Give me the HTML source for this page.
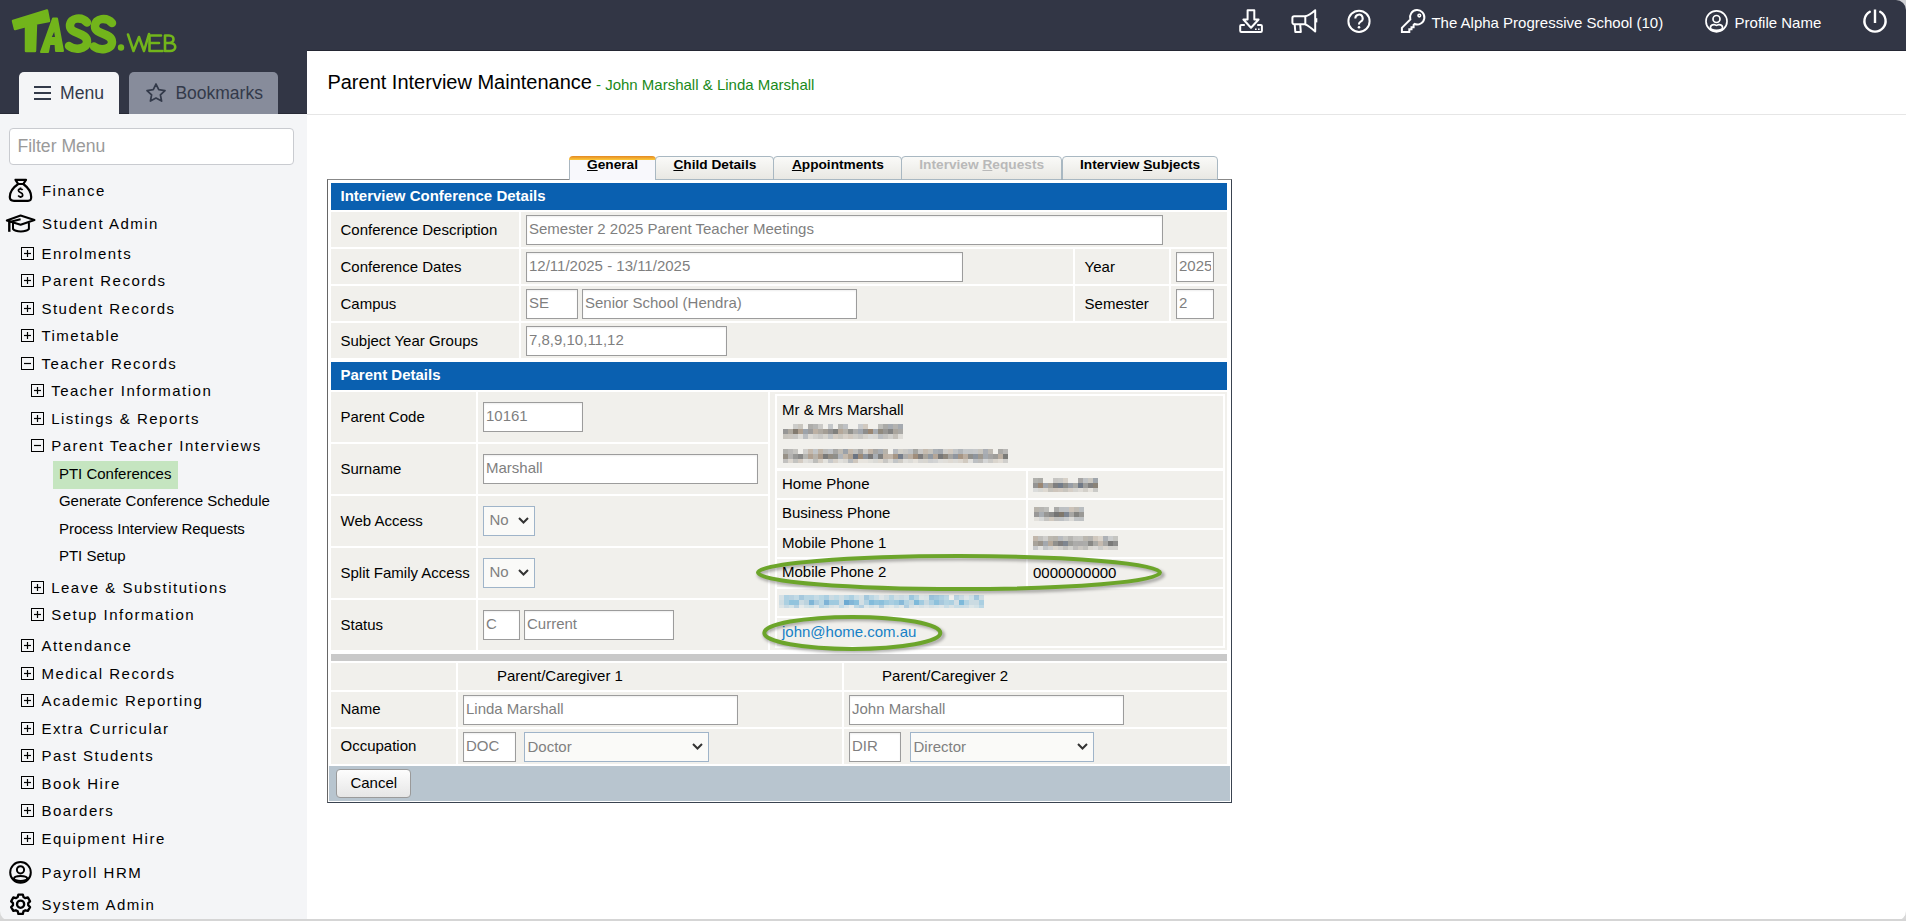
<!DOCTYPE html><html><head><meta charset="utf-8"><style>
html,body{margin:0;padding:0;width:1906px;height:921px;overflow:hidden;background:#fff;font-family:"Liberation Sans", sans-serif;}
.t{position:absolute;white-space:nowrap;line-height:normal;}
.b{position:absolute;box-sizing:border-box;}
svg{position:absolute;overflow:visible}
</style></head><body>
<div class="b" style="left:0px;top:0px;width:1906px;height:51px;background:#323645"></div>
<div class="b" style="left:307px;top:50px;width:1599px;height:1px;background:#242733"></div>
<div class="b" style="left:0px;top:51px;width:307px;height:63px;background:#323645"></div>
<div class="b" style="left:0px;top:114px;width:307px;height:807px;background:#f4f5f7"></div>
<div class="b" style="left:0px;top:113px;width:307px;height:1px;background:#272a36"></div>
<div class="b" style="left:19px;top:72px;width:100px;height:42px;background:#f4f5f7;border-radius:5px 5px 0 0"></div>
<div class="b" style="left:129px;top:72px;width:149px;height:42px;background:#878c9b;border-radius:5px 5px 0 0"></div>
<div class="b" style="left:34px;top:86px;width:17px;height:2px;background:#333a4a"></div>
<div class="b" style="left:34px;top:92px;width:17px;height:2px;background:#333a4a"></div>
<div class="b" style="left:34px;top:98px;width:17px;height:2px;background:#333a4a"></div>
<div class="t" style="left:60.1px;top:82.59px;font-size:17.6px;color:#333a4a;">Menu</div>
<svg style="left:144.5px;top:81.5px" width="22" height="22" viewBox="0 0 24 24"><path d="M12 2.2l3 6.2 6.8.9-5 4.7 1.3 6.8L12 17.5l-6.1 3.3 1.3-6.8-5-4.7 6.8-.9z" fill="none" stroke="#333a4a" stroke-width="1.9" stroke-linejoin="round"/></svg>
<div class="t" style="left:175.4px;top:82.61px;font-size:17.5px;color:#333a4a;">Bookmarks</div>
<div class="b" style="left:9px;top:128px;width:285px;height:37px;background:#fff;border:1px solid #c9cbd0;border-radius:4px"></div>
<div class="t" style="left:17.4px;top:136.39px;font-size:17.6px;color:#9a9a9a;">Filter Menu</div>
<svg style="left:0;top:0" width="190" height="60" viewBox="0 0 190 60">
<g fill="#72b51b" stroke="#72b51b" stroke-linejoin="round" stroke-linecap="round">
<path d="M13 21 L47 10.5 L49 21 L36 23.5 L35 51 L26 51 L26 26 L15 29 Z" stroke-width="2.5"/>
<path d="M41 52 L53 18.5 L57 18.5 L63 51 L56 51 L55.5 44 L49.5 44 L48 52 Z M50.2 38 L56.2 38 L54.6 28.5 Z" fill-rule="evenodd" stroke-width="2"/>
<path d="M87 22.5 C82 16.5 70 17 70 26 C70 34.5 87 32 87 41.5 C87 50 74 50 69 46" fill="none" stroke-width="8.5"/>
<path d="M112 23 C107 17 95 17.5 95 26.5 C95 35 112 32.5 112 42 C112 50.5 99 50.5 94 46.5" fill="none" stroke-width="8.5"/>
<circle cx="121" cy="47.5" r="3.2" stroke="none"/>
<path d="M128 34.5 L133.5 51 L139 37 L144 51 L149 34" fill="none" stroke-width="2.6"/>
<path d="M161 35.5 H149.5 V51 H162.5 M149.5 43 H159" fill="none" stroke-width="2.6"/>
<path d="M165 35.5 V51 H170 C177 51 177 43 170 43 H165 M165 35.5 H169 C175 35.5 175 43 169 43" fill="none" stroke-width="2.6"/>
</g></svg>
<svg style="left:1239px;top:9px" width="24" height="25" viewBox="0 0 24 25" fill="none" stroke="#fff" stroke-width="2" stroke-linejoin="round"><path d="M8.6 1.2h6.7v9.3h4.3L12 18.8 4.4 10.5h4.2z"/><path d="M5.8 15.9H2.4a1.2 1.2 0 0 0-1.2 1.2v4.6a1.2 1.2 0 0 0 1.2 1.2h19.3a1.2 1.2 0 0 0 1.2-1.2v-4.6a1.2 1.2 0 0 0-1.2-1.2h-3.5"/><path d="M16 20.3h1.6M19 20.3h1.6" stroke-width="1.4"/></svg>
<svg style="left:1291px;top:9px" width="28" height="25" viewBox="0 0 28 25" fill="none" stroke="#fff" stroke-width="2" stroke-linejoin="round"><path d="M14.3 7.2H3.2a1.8 1.8 0 0 0-1.8 1.8v4.5a1.8 1.8 0 0 0 1.8 1.8h11.1z"/><path d="M14.3 7.2C18 6.5 21 4 24.2 1.2v21.2C21 19.6 18 17 14.3 15.3"/><path d="M25.2 9.2v4.2" stroke-width="2.2"/><path d="M3.7 15.3l.6 7.6h5.5l-.6-7.6"/></svg>
<svg style="left:1347px;top:9px" width="25" height="25" viewBox="0 0 25 25" fill="none" stroke="#fff" stroke-width="2"><circle cx="12" cy="12.3" r="10.6"/><path d="M8.3 9.4a3.7 3.7 0 1 1 5.4 3.2c-1.1.6-1.7 1.3-1.7 2.4v.6" stroke-linecap="butt"/><circle cx="12" cy="18.2" r="1.3" fill="#fff" stroke="none"/></svg>
<svg style="left:1401px;top:9px" width="25" height="25" viewBox="0 0 25 25" fill="none" stroke="#fff" stroke-width="2" stroke-linejoin="miter"><path d="M0.9 23.1V18.8L9.3 10.4A7.2 7.2 0 1 1 13.6 15L12.6 16V18.3H10.5V20.3H8.3V23.1Z"/><circle cx="18.3" cy="6.6" r="1.3" stroke-width="1.6"/></svg>
<div class="t" style="left:1431.4px;top:13.82px;font-size:15px;color:#fff;">The Alpha Progressive School (10)</div>
<svg style="left:1705px;top:10px" width="24" height="24" viewBox="0 0 24 24" fill="none" stroke="#fff" stroke-width="1.7"><circle cx="11.5" cy="11.3" r="10.5"/><circle cx="11.5" cy="9" r="3.5"/><path d="M5.4 17.5C5.6 15.5 7.5 14.6 9.3 14.7 10.2 14.8 10.8 15.3 11.5 15.3 12.2 15.3 12.8 14.8 13.7 14.7 15.5 14.6 17.4 15.5 17.6 17.5 17.8 19.4 15 20.3 11.5 20.3 8 20.3 5.2 19.4 5.4 17.5Z"/></svg>
<div class="t" style="left:1734.6px;top:13.82px;font-size:15px;color:#fff;">Profile Name</div>
<svg style="left:1862px;top:8px" width="26" height="26" viewBox="0 0 26 26" fill="none" stroke="#fff" stroke-width="2.4"><path d="M13 1.5v13.5"/><path d="M7.8 3.8A10.6 10.6 0 1 0 18.2 3.8" stroke-linecap="round"/></svg>
<div class="t" style="left:41.9px;top:181.93px;font-size:15px;color:#000;letter-spacing:1.5px">Finance</div>
<div class="t" style="left:41.9px;top:215.12px;font-size:15px;color:#000;letter-spacing:1.5px">Student Admin</div>
<svg style="left:8px;top:178px" width="26" height="25" viewBox="0 0 26 25" fill="none" stroke="#000" stroke-width="2.2" stroke-linejoin="round"><path d="M7.5 1.8H18L15.3 6H10.2Z"/><path d="M10.2 6C5 9.5 1.8 14 1.8 19 1.8 22 3.5 22.8 6 22.8H20C22.5 22.8 23.2 22 23.2 19 23.2 14 20 9.5 15.3 6"/><path d="M14.6 12C14.1 11.2 13.4 10.8 12.5 10.8 11.3 10.8 10.4 11.5 10.4 12.6 10.4 14.9 14.7 14.2 14.7 16.9 14.7 18 13.8 18.8 12.5 18.8 11.4 18.8 10.7 18.3 10.2 17.6M12.5 9.6V10.8M12.5 18.8V20" stroke-width="1.7" stroke-linejoin="miter"/></svg>
<svg style="left:6px;top:214px" width="30" height="19" viewBox="0 0 30 19" fill="none" stroke="#000" stroke-width="2" stroke-linejoin="round"><path d="M0.8 6.5L14.6 1.5 28.5 6 14.6 10.8Z"/><path d="M3.5 8L14.6 5.3"/><path d="M7 8.9V15C8.7 16.9 11.6 17.4 14.8 17.4 18 17.4 21 16.9 22.9 15V8.7"/><path d="M3.3 8V17.8" stroke-width="2.4"/></svg>
<svg style="left:21px;top:246.8px" width="13" height="13" viewBox="0 0 13 13"><rect x="0.5" y="0.5" width="12" height="12" fill="none" stroke="#000" stroke-width="1"/><path d="M3 6.5h7" stroke="#000" stroke-width="1.2"/><path d="M6.5 3v7" stroke="#000" stroke-width="1.2"/></svg>
<div class="t" style="left:41.4px;top:244.93px;font-size:15px;color:#000;letter-spacing:1.5px">Enrolments</div>
<svg style="left:21px;top:274.2px" width="13" height="13" viewBox="0 0 13 13"><rect x="0.5" y="0.5" width="12" height="12" fill="none" stroke="#000" stroke-width="1"/><path d="M3 6.5h7" stroke="#000" stroke-width="1.2"/><path d="M6.5 3v7" stroke="#000" stroke-width="1.2"/></svg>
<div class="t" style="left:41.4px;top:272.32px;font-size:15px;color:#000;letter-spacing:1.5px">Parent Records</div>
<svg style="left:21px;top:301.8px" width="13" height="13" viewBox="0 0 13 13"><rect x="0.5" y="0.5" width="12" height="12" fill="none" stroke="#000" stroke-width="1"/><path d="M3 6.5h7" stroke="#000" stroke-width="1.2"/><path d="M6.5 3v7" stroke="#000" stroke-width="1.2"/></svg>
<div class="t" style="left:41.4px;top:299.93px;font-size:15px;color:#000;letter-spacing:1.5px">Student Records</div>
<svg style="left:21px;top:328.8px" width="13" height="13" viewBox="0 0 13 13"><rect x="0.5" y="0.5" width="12" height="12" fill="none" stroke="#000" stroke-width="1"/><path d="M3 6.5h7" stroke="#000" stroke-width="1.2"/><path d="M6.5 3v7" stroke="#000" stroke-width="1.2"/></svg>
<div class="t" style="left:41.4px;top:326.93px;font-size:15px;color:#000;letter-spacing:1.5px">Timetable</div>
<svg style="left:21px;top:356.8px" width="13" height="13" viewBox="0 0 13 13"><rect x="0.5" y="0.5" width="12" height="12" fill="none" stroke="#000" stroke-width="1"/><path d="M3 6.5h7" stroke="#000" stroke-width="1.2"/></svg>
<div class="t" style="left:41.4px;top:354.93px;font-size:15px;color:#000;letter-spacing:1.5px">Teacher Records</div>
<svg style="left:31px;top:383.8px" width="13" height="13" viewBox="0 0 13 13"><rect x="0.5" y="0.5" width="12" height="12" fill="none" stroke="#000" stroke-width="1"/><path d="M3 6.5h7" stroke="#000" stroke-width="1.2"/><path d="M6.5 3v7" stroke="#000" stroke-width="1.2"/></svg>
<div class="t" style="left:51.2px;top:381.93px;font-size:15px;color:#000;letter-spacing:1.5px">Teacher Information</div>
<svg style="left:31px;top:411.8px" width="13" height="13" viewBox="0 0 13 13"><rect x="0.5" y="0.5" width="12" height="12" fill="none" stroke="#000" stroke-width="1"/><path d="M3 6.5h7" stroke="#000" stroke-width="1.2"/><path d="M6.5 3v7" stroke="#000" stroke-width="1.2"/></svg>
<div class="t" style="left:51.2px;top:409.93px;font-size:15px;color:#000;letter-spacing:1.5px">Listings &amp; Reports</div>
<svg style="left:31px;top:439.2px" width="13" height="13" viewBox="0 0 13 13"><rect x="0.5" y="0.5" width="12" height="12" fill="none" stroke="#000" stroke-width="1"/><path d="M3 6.5h7" stroke="#000" stroke-width="1.2"/></svg>
<div class="t" style="left:51.2px;top:437.32px;font-size:15px;color:#000;letter-spacing:1.5px">Parent Teacher Interviews</div>
<div class="b" style="left:53px;top:461px;width:125px;height:28px;background:#c5e5c0"></div>
<div class="t" style="left:58.9px;top:464.93px;font-size:15px;color:#000;">PTI Conferences</div>
<div class="t" style="left:58.9px;top:492.23px;font-size:15px;color:#000;">Generate Conference Schedule</div>
<div class="t" style="left:58.9px;top:519.92px;font-size:15px;color:#000;">Process Interview Requests</div>
<div class="t" style="left:58.9px;top:546.82px;font-size:15px;color:#000;">PTI Setup</div>
<svg style="left:31px;top:581.0px" width="13" height="13" viewBox="0 0 13 13"><rect x="0.5" y="0.5" width="12" height="12" fill="none" stroke="#000" stroke-width="1"/><path d="M3 6.5h7" stroke="#000" stroke-width="1.2"/><path d="M6.5 3v7" stroke="#000" stroke-width="1.2"/></svg>
<div class="t" style="left:51.2px;top:579.12px;font-size:15px;color:#000;letter-spacing:1.5px">Leave &amp; Substitutions</div>
<svg style="left:31px;top:608.0999999999999px" width="13" height="13" viewBox="0 0 13 13"><rect x="0.5" y="0.5" width="12" height="12" fill="none" stroke="#000" stroke-width="1"/><path d="M3 6.5h7" stroke="#000" stroke-width="1.2"/><path d="M6.5 3v7" stroke="#000" stroke-width="1.2"/></svg>
<div class="t" style="left:51.2px;top:606.22px;font-size:15px;color:#000;letter-spacing:1.5px">Setup Information</div>
<svg style="left:21px;top:638.8px" width="13" height="13" viewBox="0 0 13 13"><rect x="0.5" y="0.5" width="12" height="12" fill="none" stroke="#000" stroke-width="1"/><path d="M3 6.5h7" stroke="#000" stroke-width="1.2"/><path d="M6.5 3v7" stroke="#000" stroke-width="1.2"/></svg>
<div class="t" style="left:41.4px;top:636.92px;font-size:15px;color:#000;letter-spacing:1.5px">Attendance</div>
<svg style="left:21px;top:666.8px" width="13" height="13" viewBox="0 0 13 13"><rect x="0.5" y="0.5" width="12" height="12" fill="none" stroke="#000" stroke-width="1"/><path d="M3 6.5h7" stroke="#000" stroke-width="1.2"/><path d="M6.5 3v7" stroke="#000" stroke-width="1.2"/></svg>
<div class="t" style="left:41.4px;top:664.92px;font-size:15px;color:#000;letter-spacing:1.5px">Medical Records</div>
<svg style="left:21px;top:693.6999999999999px" width="13" height="13" viewBox="0 0 13 13"><rect x="0.5" y="0.5" width="12" height="12" fill="none" stroke="#000" stroke-width="1"/><path d="M3 6.5h7" stroke="#000" stroke-width="1.2"/><path d="M6.5 3v7" stroke="#000" stroke-width="1.2"/></svg>
<div class="t" style="left:41.4px;top:691.82px;font-size:15px;color:#000;letter-spacing:1.5px">Academic Reporting</div>
<svg style="left:21px;top:722.0px" width="13" height="13" viewBox="0 0 13 13"><rect x="0.5" y="0.5" width="12" height="12" fill="none" stroke="#000" stroke-width="1"/><path d="M3 6.5h7" stroke="#000" stroke-width="1.2"/><path d="M6.5 3v7" stroke="#000" stroke-width="1.2"/></svg>
<div class="t" style="left:41.4px;top:720.12px;font-size:15px;color:#000;letter-spacing:1.5px">Extra Curricular</div>
<svg style="left:21px;top:748.9px" width="13" height="13" viewBox="0 0 13 13"><rect x="0.5" y="0.5" width="12" height="12" fill="none" stroke="#000" stroke-width="1"/><path d="M3 6.5h7" stroke="#000" stroke-width="1.2"/><path d="M6.5 3v7" stroke="#000" stroke-width="1.2"/></svg>
<div class="t" style="left:41.4px;top:747.02px;font-size:15px;color:#000;letter-spacing:1.5px">Past Students</div>
<svg style="left:21px;top:776.4px" width="13" height="13" viewBox="0 0 13 13"><rect x="0.5" y="0.5" width="12" height="12" fill="none" stroke="#000" stroke-width="1"/><path d="M3 6.5h7" stroke="#000" stroke-width="1.2"/><path d="M6.5 3v7" stroke="#000" stroke-width="1.2"/></svg>
<div class="t" style="left:41.4px;top:774.52px;font-size:15px;color:#000;letter-spacing:1.5px">Book Hire</div>
<svg style="left:21px;top:803.8px" width="13" height="13" viewBox="0 0 13 13"><rect x="0.5" y="0.5" width="12" height="12" fill="none" stroke="#000" stroke-width="1"/><path d="M3 6.5h7" stroke="#000" stroke-width="1.2"/><path d="M6.5 3v7" stroke="#000" stroke-width="1.2"/></svg>
<div class="t" style="left:41.4px;top:801.92px;font-size:15px;color:#000;letter-spacing:1.5px">Boarders</div>
<svg style="left:21px;top:831.8px" width="13" height="13" viewBox="0 0 13 13"><rect x="0.5" y="0.5" width="12" height="12" fill="none" stroke="#000" stroke-width="1"/><path d="M3 6.5h7" stroke="#000" stroke-width="1.2"/><path d="M6.5 3v7" stroke="#000" stroke-width="1.2"/></svg>
<div class="t" style="left:41.4px;top:829.92px;font-size:15px;color:#000;letter-spacing:1.5px">Equipment Hire</div>
<div class="t" style="left:41.6px;top:863.72px;font-size:15px;color:#000;letter-spacing:1.5px">Payroll HRM</div>
<div class="t" style="left:41.6px;top:895.92px;font-size:15px;color:#000;letter-spacing:1.5px">System Admin</div>
<svg style="left:9px;top:861px" width="24" height="24" viewBox="0 0 24 24" fill="none" stroke="#000" stroke-width="2"><circle cx="11.5" cy="11.4" r="10.3"/><circle cx="11.5" cy="8.8" r="3.6"/><ellipse cx="11.6" cy="17.4" rx="6.6" ry="2.5"/></svg>
<svg style="left:9px;top:892px" width="24" height="24" viewBox="0 0 24 24" fill="none" stroke="#000" stroke-width="2.3" stroke-linejoin="round"><path d="M8.72 5.06 L9.37 2.55 L13.83 2.55 L14.48 5.06 L16.34 6.13 L18.84 5.45 L21.07 9.31 L19.23 11.13 L19.23 13.27 L21.07 15.09 L18.84 18.95 L16.34 18.27 L14.48 19.34 L13.83 21.85 L9.37 21.85 L8.72 19.34 L6.86 18.27 L4.36 18.95 L2.13 15.09 L3.97 13.27 L3.97 11.13 L2.13 9.31 L4.36 5.45 L6.86 6.13Z"/><circle cx="11.6" cy="12.2" r="3.6"/></svg>
<div class="b" style="left:307px;top:114px;width:1599px;height:1px;background:#e6e6e6"></div>
<div class="t" style="left:327.4px;top:71.10px;font-size:20px;color:#000;">Parent Interview Maintenance</div>
<div class="t" style="left:596px;top:75.92px;font-size:15px;color:#1a8a1a;">- John Marshall &amp; Linda Marshall</div>
<div class="b" style="left:327px;top:179px;width:905px;height:624px;background:#fff;border-style:solid;border-width:1px;border-color:#888 #3a4350 #3a4350 #666"></div>
<div class="b" style="left:569px;top:159px;width:87px;height:21px;background:#f8f8fc;border:1px solid #a9b6c0;border-bottom:none;border-top:none"></div>
<div class="b" style="left:569px;top:156px;width:87px;height:4px;background:linear-gradient(#e38823,#fdca3c);border-radius:4px 4px 0 0"></div>
<div class="b" style="left:655px;top:156px;width:119px;height:24px;background:linear-gradient(#fafaf8,#e9e8e3);border:1px solid #a9b8c2;border-radius:4px 4px 0 0"></div>
<div class="b" style="left:773px;top:156px;width:129px;height:24px;background:linear-gradient(#fafaf8,#e9e8e3);border:1px solid #a9b8c2;border-radius:4px 4px 0 0"></div>
<div class="b" style="left:901px;top:156px;width:161px;height:24px;background:linear-gradient(#fafaf8,#e9e8e3);border:1px solid #a9b8c2;border-radius:4px 4px 0 0"></div>
<div class="b" style="left:1062px;top:156px;width:156px;height:24px;background:linear-gradient(#fafaf8,#e9e8e3);border:1px solid #a9b8c2;border-radius:4px 4px 0 0"></div>
<div class="t" style="left:587px;top:156.99px;font-size:13.7px;color:#000;font-weight:bold"><u>G</u>eneral</div>
<div class="t" style="left:673.4px;top:156.99px;font-size:13.7px;color:#000;font-weight:bold"><u>C</u>hild Details</div>
<div class="t" style="left:791.9px;top:156.99px;font-size:13.7px;color:#000;font-weight:bold"><u>A</u>ppointments</div>
<div class="t" style="left:919.3px;top:156.99px;font-size:13.7px;color:#b9b9b9;font-weight:bold">Interview <u>R</u>equests</div>
<div class="t" style="left:1080px;top:156.99px;font-size:13.7px;color:#000;font-weight:bold">Interview <u>S</u>ubjects</div>
<div class="b" style="left:331px;top:183px;width:896px;height:27px;background:#0a60b0"></div>
<div class="t" style="left:340.5px;top:186.93px;font-size:15px;color:#fff;font-weight:bold">Interview Conference Details</div>
<div class="b" style="left:331px;top:212px;width:188px;height:35px;background:#f1f0ec"></div>
<div class="b" style="left:331px;top:249px;width:188px;height:35px;background:#f1f0ec"></div>
<div class="b" style="left:331px;top:286px;width:188px;height:35px;background:#f1f0ec"></div>
<div class="b" style="left:331px;top:323px;width:188px;height:35px;background:#f1f0ec"></div>
<div class="b" style="left:521px;top:212px;width:706px;height:35px;background:#f1f0ec"></div>
<div class="b" style="left:521px;top:249px;width:552px;height:35px;background:#f1f0ec"></div>
<div class="b" style="left:1075px;top:249px;width:94px;height:35px;background:#f1f0ec"></div>
<div class="b" style="left:1171px;top:249px;width:56px;height:35px;background:#f1f0ec"></div>
<div class="b" style="left:521px;top:286px;width:552px;height:35px;background:#f1f0ec"></div>
<div class="b" style="left:1075px;top:286px;width:94px;height:35px;background:#f1f0ec"></div>
<div class="b" style="left:1171px;top:286px;width:56px;height:35px;background:#f1f0ec"></div>
<div class="b" style="left:521px;top:323px;width:706px;height:35px;background:#f1f0ec"></div>
<div class="t" style="left:340.5px;top:220.93px;font-size:15px;color:#000;">Conference Description</div>
<div class="t" style="left:340.5px;top:257.93px;font-size:15px;color:#000;">Conference Dates</div>
<div class="t" style="left:340.5px;top:294.93px;font-size:15px;color:#000;">Campus</div>
<div class="t" style="left:340.5px;top:331.93px;font-size:15px;color:#000;">Subject Year Groups</div>
<div class="t" style="left:1084.6px;top:257.93px;font-size:15px;color:#000;">Year</div>
<div class="t" style="left:1084.6px;top:294.93px;font-size:15px;color:#000;">Semester</div>
<div class="b" style="left:526px;top:215px;width:637px;height:30px;background:#fff;border:1px solid #9c9c9c;box-shadow:inset 0 1px 2px rgba(0,0,0,0.07)"><div style="position:absolute;left:2px;right:2px;top:0;bottom:0;overflow:hidden"><div class="t" style="left:0px;top:3.50px;font-size:15px;color:#7f7f7f">Semester 2 2025 Parent Teacher Meetings</div></div></div>
<div class="b" style="left:526px;top:252px;width:437px;height:30px;background:#fff;border:1px solid #9c9c9c;box-shadow:inset 0 1px 2px rgba(0,0,0,0.07)"><div style="position:absolute;left:2px;right:2px;top:0;bottom:0;overflow:hidden"><div class="t" style="left:0px;top:3.50px;font-size:15px;color:#7f7f7f">12/11/2025 - 13/11/2025</div></div></div>
<div class="b" style="left:1176px;top:252px;width:38px;height:30px;background:#fff;border:1px solid #9c9c9c;box-shadow:inset 0 1px 2px rgba(0,0,0,0.07)"><div style="position:absolute;left:2px;right:2px;top:0;bottom:0;overflow:hidden"><div class="t" style="left:0px;top:3.50px;font-size:15px;color:#7f7f7f">2025</div></div></div>
<div class="b" style="left:526px;top:289px;width:52px;height:30px;background:#fff;border:1px solid #9c9c9c;box-shadow:inset 0 1px 2px rgba(0,0,0,0.07)"><div style="position:absolute;left:2px;right:2px;top:0;bottom:0;overflow:hidden"><div class="t" style="left:0px;top:3.50px;font-size:15px;color:#7f7f7f">SE</div></div></div>
<div class="b" style="left:582px;top:289px;width:275px;height:30px;background:#fff;border:1px solid #9c9c9c;box-shadow:inset 0 1px 2px rgba(0,0,0,0.07)"><div style="position:absolute;left:2px;right:2px;top:0;bottom:0;overflow:hidden"><div class="t" style="left:0px;top:3.50px;font-size:15px;color:#7f7f7f">Senior School (Hendra)</div></div></div>
<div class="b" style="left:1176px;top:289px;width:38px;height:30px;background:#fff;border:1px solid #9c9c9c;box-shadow:inset 0 1px 2px rgba(0,0,0,0.07)"><div style="position:absolute;left:2px;right:2px;top:0;bottom:0;overflow:hidden"><div class="t" style="left:0px;top:3.50px;font-size:15px;color:#7f7f7f">2</div></div></div>
<div class="b" style="left:526px;top:326px;width:201px;height:30px;background:#fff;border:1px solid #9c9c9c;box-shadow:inset 0 1px 2px rgba(0,0,0,0.07)"><div style="position:absolute;left:2px;right:2px;top:0;bottom:0;overflow:hidden"><div class="t" style="left:0px;top:3.50px;font-size:15px;color:#7f7f7f">7,8,9,10,11,12</div></div></div>
<div class="b" style="left:331px;top:362px;width:896px;height:28px;background:#0a60b0"></div>
<div class="t" style="left:340.5px;top:366.43px;font-size:15px;color:#fff;font-weight:bold">Parent Details</div>
<div class="b" style="left:331px;top:392px;width:145px;height:50px;background:#f1f0ec"></div>
<div class="b" style="left:478px;top:392px;width:290px;height:50px;background:#f1f0ec"></div>
<div class="b" style="left:331px;top:444px;width:145px;height:50px;background:#f1f0ec"></div>
<div class="b" style="left:478px;top:444px;width:290px;height:50px;background:#f1f0ec"></div>
<div class="b" style="left:331px;top:496px;width:145px;height:50px;background:#f1f0ec"></div>
<div class="b" style="left:478px;top:496px;width:290px;height:50px;background:#f1f0ec"></div>
<div class="b" style="left:331px;top:548px;width:145px;height:50px;background:#f1f0ec"></div>
<div class="b" style="left:478px;top:548px;width:290px;height:50px;background:#f1f0ec"></div>
<div class="b" style="left:331px;top:600px;width:145px;height:50px;background:#f1f0ec"></div>
<div class="b" style="left:478px;top:600px;width:290px;height:50px;background:#f1f0ec"></div>
<div class="t" style="left:340.5px;top:407.93px;font-size:15px;color:#000;">Parent Code</div>
<div class="t" style="left:340.5px;top:459.93px;font-size:15px;color:#000;">Surname</div>
<div class="t" style="left:340.5px;top:511.93px;font-size:15px;color:#000;">Web Access</div>
<div class="t" style="left:340.5px;top:563.92px;font-size:15px;color:#000;">Split Family Access</div>
<div class="t" style="left:340.5px;top:615.92px;font-size:15px;color:#000;">Status</div>
<div class="b" style="left:483px;top:402px;width:100px;height:30px;background:#fff;border:1px solid #9c9c9c;box-shadow:inset 0 1px 2px rgba(0,0,0,0.07)"><div style="position:absolute;left:2px;right:2px;top:0;bottom:0;overflow:hidden"><div class="t" style="left:0px;top:3.50px;font-size:15px;color:#7f7f7f">10161</div></div></div>
<div class="b" style="left:483px;top:454px;width:275px;height:30px;background:#fff;border:1px solid #9c9c9c;box-shadow:inset 0 1px 2px rgba(0,0,0,0.07)"><div style="position:absolute;left:2px;right:2px;top:0;bottom:0;overflow:hidden"><div class="t" style="left:0px;top:3.50px;font-size:15px;color:#7f7f7f">Marshall</div></div></div>
<div class="b" style="left:483px;top:506px;width:52px;height:30px;background:#fafaf8;border:1px solid #9fb4c9"><div class="t" style="left:5.5px;top:3.80px;font-size:15px;color:#808080">No</div></div>
<svg style="left:518px;top:517px" width="11" height="7" viewBox="0 0 11 7"><path d="M1 1l4.5 4.5L10 1" fill="none" stroke="#333" stroke-width="2"/></svg>
<div class="b" style="left:483px;top:558px;width:52px;height:30px;background:#fafaf8;border:1px solid #9fb4c9"><div class="t" style="left:5.5px;top:3.80px;font-size:15px;color:#808080">No</div></div>
<svg style="left:518px;top:569px" width="11" height="7" viewBox="0 0 11 7"><path d="M1 1l4.5 4.5L10 1" fill="none" stroke="#333" stroke-width="2"/></svg>
<div class="b" style="left:483px;top:610px;width:37px;height:30px;background:#fff;border:1px solid #9c9c9c;box-shadow:inset 0 1px 2px rgba(0,0,0,0.07)"><div style="position:absolute;left:2px;right:2px;top:0;bottom:0;overflow:hidden"><div class="t" style="left:0px;top:3.50px;font-size:15px;color:#7f7f7f">C</div></div></div>
<div class="b" style="left:524px;top:610px;width:150px;height:30px;background:#fff;border:1px solid #9c9c9c;box-shadow:inset 0 1px 2px rgba(0,0,0,0.07)"><div style="position:absolute;left:2px;right:2px;top:0;bottom:0;overflow:hidden"><div class="t" style="left:0px;top:3.50px;font-size:15px;color:#7f7f7f">Current</div></div></div>
<div class="b" style="left:770px;top:392px;width:457px;height:258px;background:#f1f0ec"></div>
<div class="b" style="left:775px;top:394px;width:450px;height:254px;background:#fff"></div>
<div class="b" style="left:777px;top:396px;width:446px;height:72px;background:#f1f0ec"></div>
<div class="t" style="left:782px;top:401.32px;font-size:15px;color:#000;">Mr &amp; Mrs Marshall</div>
<div class="b" style="left:777px;top:471px;width:249px;height:27px;background:#f1f0ec"></div>
<div class="b" style="left:1028px;top:471px;width:195px;height:27px;background:#f1f0ec"></div>
<div class="t" style="left:782px;top:475.12px;font-size:15px;color:#000;">Home Phone</div>
<div class="b" style="left:777px;top:500px;width:249px;height:28px;background:#f1f0ec"></div>
<div class="b" style="left:1028px;top:500px;width:195px;height:28px;background:#f1f0ec"></div>
<div class="t" style="left:782px;top:504.12px;font-size:15px;color:#000;">Business Phone</div>
<div class="b" style="left:777px;top:530px;width:249px;height:27px;background:#f1f0ec"></div>
<div class="b" style="left:1028px;top:530px;width:195px;height:27px;background:#f1f0ec"></div>
<div class="t" style="left:782px;top:534.12px;font-size:15px;color:#000;">Mobile Phone 1</div>
<div class="b" style="left:777px;top:559px;width:249px;height:28px;background:#f1f0ec"></div>
<div class="b" style="left:1028px;top:559px;width:195px;height:28px;background:#f1f0ec"></div>
<div class="t" style="left:782px;top:563.12px;font-size:15px;color:#000;">Mobile Phone 2</div>
<div class="b" style="left:777px;top:589px;width:446px;height:27px;background:#f1f0ec"></div>
<div class="b" style="left:777px;top:618px;width:446px;height:28px;background:#f1f0ec"></div>
<svg style="left:783px;top:424px" width="120" height="15"><rect x="10" y="0" width="5" height="5" fill="rgb(204, 204, 201)"/><rect x="15" y="0" width="5" height="5" fill="rgb(201, 198, 191)"/><rect x="25" y="0" width="5" height="5" fill="rgb(173, 172, 169)"/><rect x="30" y="0" width="5" height="5" fill="rgb(181, 181, 179)"/><rect x="35" y="0" width="5" height="5" fill="rgb(203, 202, 199)"/><rect x="45" y="0" width="5" height="5" fill="rgb(196, 199, 201)"/><rect x="55" y="0" width="5" height="5" fill="rgb(184, 184, 180)"/><rect x="60" y="0" width="5" height="5" fill="rgb(190, 193, 196)"/><rect x="75" y="0" width="5" height="5" fill="rgb(201, 203, 205)"/><rect x="80" y="0" width="5" height="5" fill="rgb(209, 201, 191)"/><rect x="95" y="0" width="5" height="5" fill="rgb(190, 190, 186)"/><rect x="100" y="0" width="5" height="5" fill="rgb(170, 170, 167)"/><rect x="105" y="0" width="5" height="5" fill="rgb(166, 171, 177)"/><rect x="110" y="0" width="5" height="5" fill="rgb(180, 179, 176)"/><rect x="115" y="0" width="5" height="5" fill="rgb(165, 170, 176)"/><rect x="0" y="5" width="5" height="5" fill="rgb(151, 151, 150)"/><rect x="5" y="5" width="5" height="5" fill="rgb(173, 168, 159)"/><rect x="10" y="5" width="5" height="5" fill="rgb(131, 123, 112)"/><rect x="15" y="5" width="5" height="5" fill="rgb(175, 160, 144)"/><rect x="20" y="5" width="5" height="5" fill="rgb(157, 163, 170)"/><rect x="25" y="5" width="5" height="5" fill="rgb(157, 156, 155)"/><rect x="30" y="5" width="5" height="5" fill="rgb(189, 177, 164)"/><rect x="35" y="5" width="5" height="5" fill="rgb(175, 170, 162)"/><rect x="40" y="5" width="5" height="5" fill="rgb(164, 158, 149)"/><rect x="45" y="5" width="5" height="5" fill="rgb(148, 147, 146)"/><rect x="50" y="5" width="5" height="5" fill="rgb(129, 129, 126)"/><rect x="55" y="5" width="5" height="5" fill="rgb(181, 168, 154)"/><rect x="60" y="5" width="5" height="5" fill="rgb(182, 178, 170)"/><rect x="65" y="5" width="5" height="5" fill="rgb(146, 146, 142)"/><rect x="70" y="5" width="5" height="5" fill="rgb(175, 174, 172)"/><rect x="75" y="5" width="5" height="5" fill="rgb(162, 167, 174)"/><rect x="80" y="5" width="5" height="5" fill="rgb(142, 142, 141)"/><rect x="85" y="5" width="5" height="5" fill="rgb(154, 135, 116)"/><rect x="90" y="5" width="5" height="5" fill="rgb(167, 172, 178)"/><rect x="95" y="5" width="5" height="5" fill="rgb(144, 138, 127)"/><rect x="100" y="5" width="5" height="5" fill="rgb(151, 150, 147)"/><rect x="105" y="5" width="5" height="5" fill="rgb(132, 132, 131)"/><rect x="110" y="5" width="5" height="5" fill="rgb(170, 165, 157)"/><rect x="115" y="5" width="5" height="5" fill="rgb(170, 169, 166)"/><rect x="0" y="10" width="5" height="5" fill="rgb(199, 196, 189)"/><rect x="5" y="10" width="5" height="5" fill="rgb(202, 198, 192)"/><rect x="10" y="10" width="5" height="5" fill="rgb(199, 198, 195)"/><rect x="15" y="10" width="5" height="5" fill="rgb(221, 220, 216)"/><rect x="20" y="10" width="5" height="5" fill="rgb(187, 190, 193)"/><rect x="25" y="10" width="5" height="5" fill="rgb(220, 218, 213)"/><rect x="30" y="10" width="5" height="5" fill="rgb(210, 209, 205)"/><rect x="35" y="10" width="5" height="5" fill="rgb(202, 201, 198)"/><rect x="40" y="10" width="5" height="5" fill="rgb(214, 212, 206)"/><rect x="45" y="10" width="5" height="5" fill="rgb(193, 196, 198)"/><rect x="50" y="10" width="5" height="5" fill="rgb(212, 205, 196)"/><rect x="55" y="10" width="5" height="5" fill="rgb(202, 199, 192)"/><rect x="60" y="10" width="5" height="5" fill="rgb(215, 209, 201)"/><rect x="65" y="10" width="5" height="5" fill="rgb(209, 201, 192)"/><rect x="70" y="10" width="5" height="5" fill="rgb(208, 206, 200)"/><rect x="75" y="10" width="5" height="5" fill="rgb(199, 198, 195)"/><rect x="80" y="10" width="5" height="5" fill="rgb(213, 210, 204)"/><rect x="85" y="10" width="5" height="5" fill="rgb(216, 217, 216)"/><rect x="90" y="10" width="5" height="5" fill="rgb(216, 215, 211)"/><rect x="95" y="10" width="5" height="5" fill="rgb(188, 191, 194)"/><rect x="100" y="10" width="5" height="5" fill="rgb(197, 196, 193)"/><rect x="105" y="10" width="5" height="5" fill="rgb(209, 208, 204)"/><rect x="110" y="10" width="5" height="5" fill="rgb(197, 193, 186)"/><rect x="115" y="10" width="5" height="5" fill="rgb(223, 221, 216)"/></svg>
<svg style="left:783px;top:449px" width="225" height="14"><rect x="0" y="0" width="5" height="5" fill="rgb(177, 177, 173)"/><rect x="5" y="0" width="5" height="5" fill="rgb(186, 185, 183)"/><rect x="10" y="0" width="5" height="5" fill="rgb(197, 196, 192)"/><rect x="20" y="0" width="5" height="5" fill="rgb(206, 205, 202)"/><rect x="25" y="0" width="5" height="5" fill="rgb(196, 185, 173)"/><rect x="30" y="0" width="5" height="5" fill="rgb(193, 196, 198)"/><rect x="35" y="0" width="5" height="5" fill="rgb(189, 178, 165)"/><rect x="40" y="0" width="5" height="5" fill="rgb(187, 187, 185)"/><rect x="45" y="0" width="5" height="5" fill="rgb(190, 193, 196)"/><rect x="50" y="0" width="5" height="5" fill="rgb(167, 167, 165)"/><rect x="55" y="0" width="5" height="5" fill="rgb(190, 186, 178)"/><rect x="60" y="0" width="5" height="5" fill="rgb(156, 162, 169)"/><rect x="65" y="0" width="5" height="5" fill="rgb(195, 184, 172)"/><rect x="70" y="0" width="5" height="5" fill="rgb(190, 190, 187)"/><rect x="75" y="0" width="5" height="5" fill="rgb(166, 165, 163)"/><rect x="80" y="0" width="5" height="5" fill="rgb(209, 206, 200)"/><rect x="85" y="0" width="5" height="5" fill="rgb(191, 179, 167)"/><rect x="90" y="0" width="5" height="5" fill="rgb(166, 165, 163)"/><rect x="95" y="0" width="5" height="5" fill="rgb(166, 171, 177)"/><rect x="100" y="0" width="5" height="5" fill="rgb(183, 179, 171)"/><rect x="110" y="0" width="5" height="5" fill="rgb(183, 186, 190)"/><rect x="115" y="0" width="5" height="5" fill="rgb(208, 206, 199)"/><rect x="120" y="0" width="5" height="5" fill="rgb(201, 200, 197)"/><rect x="125" y="0" width="5" height="5" fill="rgb(191, 194, 196)"/><rect x="130" y="0" width="5" height="5" fill="rgb(165, 165, 161)"/><rect x="135" y="0" width="5" height="5" fill="rgb(199, 198, 196)"/><rect x="140" y="0" width="5" height="5" fill="rgb(197, 187, 175)"/><rect x="145" y="0" width="5" height="5" fill="rgb(197, 194, 187)"/><rect x="150" y="0" width="5" height="5" fill="rgb(170, 175, 180)"/><rect x="155" y="0" width="5" height="5" fill="rgb(164, 169, 175)"/><rect x="160" y="0" width="5" height="5" fill="rgb(207, 206, 202)"/><rect x="165" y="0" width="5" height="5" fill="rgb(209, 201, 192)"/><rect x="170" y="0" width="5" height="5" fill="rgb(192, 195, 197)"/><rect x="175" y="0" width="5" height="5" fill="rgb(178, 182, 186)"/><rect x="180" y="0" width="5" height="5" fill="rgb(196, 199, 201)"/><rect x="185" y="0" width="5" height="5" fill="rgb(195, 198, 200)"/><rect x="190" y="0" width="5" height="5" fill="rgb(198, 200, 202)"/><rect x="195" y="0" width="5" height="5" fill="rgb(200, 197, 190)"/><rect x="200" y="0" width="5" height="5" fill="rgb(170, 174, 180)"/><rect x="205" y="0" width="5" height="5" fill="rgb(189, 185, 178)"/><rect x="215" y="0" width="5" height="5" fill="rgb(170, 169, 166)"/><rect x="220" y="0" width="5" height="5" fill="rgb(184, 183, 181)"/><rect x="0" y="5" width="5" height="5" fill="rgb(151, 145, 135)"/><rect x="5" y="5" width="5" height="5" fill="rgb(179, 178, 176)"/><rect x="10" y="5" width="5" height="5" fill="rgb(152, 152, 150)"/><rect x="15" y="5" width="5" height="5" fill="rgb(137, 137, 136)"/><rect x="20" y="5" width="5" height="5" fill="rgb(179, 179, 175)"/><rect x="25" y="5" width="5" height="5" fill="rgb(176, 161, 146)"/><rect x="30" y="5" width="5" height="5" fill="rgb(182, 177, 169)"/><rect x="35" y="5" width="5" height="5" fill="rgb(170, 154, 138)"/><rect x="40" y="5" width="5" height="5" fill="rgb(122, 122, 121)"/><rect x="45" y="5" width="5" height="5" fill="rgb(147, 141, 131)"/><rect x="50" y="5" width="5" height="5" fill="rgb(143, 143, 139)"/><rect x="55" y="5" width="5" height="5" fill="rgb(176, 180, 185)"/><rect x="60" y="5" width="5" height="5" fill="rgb(195, 185, 173)"/><rect x="65" y="5" width="5" height="5" fill="rgb(176, 162, 146)"/><rect x="70" y="5" width="5" height="5" fill="rgb(107, 116, 130)"/><rect x="75" y="5" width="5" height="5" fill="rgb(157, 139, 120)"/><rect x="80" y="5" width="5" height="5" fill="rgb(141, 148, 157)"/><rect x="85" y="5" width="5" height="5" fill="rgb(122, 121, 121)"/><rect x="90" y="5" width="5" height="5" fill="rgb(167, 172, 178)"/><rect x="95" y="5" width="5" height="5" fill="rgb(128, 128, 127)"/><rect x="100" y="5" width="5" height="5" fill="rgb(189, 177, 164)"/><rect x="105" y="5" width="5" height="5" fill="rgb(192, 181, 169)"/><rect x="110" y="5" width="5" height="5" fill="rgb(166, 150, 133)"/><rect x="115" y="5" width="5" height="5" fill="rgb(118, 126, 139)"/><rect x="120" y="5" width="5" height="5" fill="rgb(174, 173, 171)"/><rect x="125" y="5" width="5" height="5" fill="rgb(186, 174, 161)"/><rect x="130" y="5" width="5" height="5" fill="rgb(160, 142, 124)"/><rect x="135" y="5" width="5" height="5" fill="rgb(126, 125, 125)"/><rect x="140" y="5" width="5" height="5" fill="rgb(169, 164, 155)"/><rect x="145" y="5" width="5" height="5" fill="rgb(146, 153, 161)"/><rect x="150" y="5" width="5" height="5" fill="rgb(180, 166, 152)"/><rect x="155" y="5" width="5" height="5" fill="rgb(120, 120, 120)"/><rect x="160" y="5" width="5" height="5" fill="rgb(142, 135, 125)"/><rect x="165" y="5" width="5" height="5" fill="rgb(166, 165, 162)"/><rect x="170" y="5" width="5" height="5" fill="rgb(144, 150, 159)"/><rect x="175" y="5" width="5" height="5" fill="rgb(166, 149, 132)"/><rect x="180" y="5" width="5" height="5" fill="rgb(186, 173, 160)"/><rect x="185" y="5" width="5" height="5" fill="rgb(143, 143, 140)"/><rect x="190" y="5" width="5" height="5" fill="rgb(142, 149, 158)"/><rect x="195" y="5" width="5" height="5" fill="rgb(159, 153, 144)"/><rect x="200" y="5" width="5" height="5" fill="rgb(165, 170, 176)"/><rect x="205" y="5" width="5" height="5" fill="rgb(165, 164, 163)"/><rect x="210" y="5" width="5" height="5" fill="rgb(158, 157, 154)"/><rect x="215" y="5" width="5" height="5" fill="rgb(187, 175, 162)"/><rect x="220" y="5" width="5" height="5" fill="rgb(123, 123, 120)"/><rect x="0" y="10" width="5" height="4" fill="rgb(194, 193, 191)"/><rect x="5" y="10" width="5" height="4" fill="rgb(220, 215, 208)"/><rect x="10" y="10" width="5" height="4" fill="rgb(195, 195, 192)"/><rect x="15" y="10" width="5" height="4" fill="rgb(211, 203, 194)"/><rect x="20" y="10" width="5" height="4" fill="rgb(225, 224, 220)"/><rect x="25" y="10" width="5" height="4" fill="rgb(218, 217, 214)"/><rect x="30" y="10" width="5" height="4" fill="rgb(189, 189, 186)"/><rect x="35" y="10" width="5" height="4" fill="rgb(214, 207, 198)"/><rect x="40" y="10" width="5" height="4" fill="rgb(228, 227, 222)"/><rect x="45" y="10" width="5" height="4" fill="rgb(199, 201, 203)"/><rect x="50" y="10" width="5" height="4" fill="rgb(217, 211, 203)"/><rect x="55" y="10" width="5" height="4" fill="rgb(225, 224, 220)"/><rect x="60" y="10" width="5" height="4" fill="rgb(218, 217, 213)"/><rect x="65" y="10" width="5" height="4" fill="rgb(184, 188, 191)"/><rect x="70" y="10" width="5" height="4" fill="rgb(207, 199, 189)"/><rect x="75" y="10" width="5" height="4" fill="rgb(231, 228, 222)"/><rect x="80" y="10" width="5" height="4" fill="rgb(231, 228, 222)"/><rect x="85" y="10" width="5" height="4" fill="rgb(225, 224, 219)"/><rect x="90" y="10" width="5" height="4" fill="rgb(218, 218, 214)"/><rect x="95" y="10" width="5" height="4" fill="rgb(222, 217, 209)"/><rect x="100" y="10" width="5" height="4" fill="rgb(200, 199, 196)"/><rect x="105" y="10" width="5" height="4" fill="rgb(221, 219, 214)"/><rect x="110" y="10" width="5" height="4" fill="rgb(194, 197, 199)"/><rect x="115" y="10" width="5" height="4" fill="rgb(206, 203, 197)"/><rect x="120" y="10" width="5" height="4" fill="rgb(226, 225, 221)"/><rect x="125" y="10" width="5" height="4" fill="rgb(220, 219, 215)"/><rect x="130" y="10" width="5" height="4" fill="rgb(230, 227, 221)"/><rect x="135" y="10" width="5" height="4" fill="rgb(215, 214, 211)"/><rect x="140" y="10" width="5" height="4" fill="rgb(216, 214, 208)"/><rect x="145" y="10" width="5" height="4" fill="rgb(207, 208, 209)"/><rect x="150" y="10" width="5" height="4" fill="rgb(211, 212, 212)"/><rect x="155" y="10" width="5" height="4" fill="rgb(224, 223, 220)"/><rect x="160" y="10" width="5" height="4" fill="rgb(224, 222, 217)"/><rect x="165" y="10" width="5" height="4" fill="rgb(223, 218, 211)"/><rect x="170" y="10" width="5" height="4" fill="rgb(221, 220, 216)"/><rect x="175" y="10" width="5" height="4" fill="rgb(221, 216, 209)"/><rect x="180" y="10" width="5" height="4" fill="rgb(209, 202, 192)"/><rect x="185" y="10" width="5" height="4" fill="rgb(225, 224, 221)"/><rect x="190" y="10" width="5" height="4" fill="rgb(188, 191, 194)"/><rect x="195" y="10" width="5" height="4" fill="rgb(190, 189, 187)"/><rect x="200" y="10" width="5" height="4" fill="rgb(213, 214, 214)"/><rect x="205" y="10" width="5" height="4" fill="rgb(204, 203, 200)"/><rect x="210" y="10" width="5" height="4" fill="rgb(218, 213, 205)"/><rect x="215" y="10" width="5" height="4" fill="rgb(225, 220, 213)"/><rect x="220" y="10" width="5" height="4" fill="rgb(208, 207, 204)"/></svg>
<svg style="left:1033px;top:478px" width="65" height="14"><rect x="0" y="0" width="5" height="5" fill="rgb(176, 176, 172)"/><rect x="5" y="0" width="5" height="5" fill="rgb(171, 171, 167)"/><rect x="20" y="0" width="5" height="5" fill="rgb(198, 197, 194)"/><rect x="25" y="0" width="5" height="5" fill="rgb(200, 200, 197)"/><rect x="30" y="0" width="5" height="5" fill="rgb(215, 209, 200)"/><rect x="45" y="0" width="5" height="5" fill="rgb(167, 166, 165)"/><rect x="50" y="0" width="5" height="5" fill="rgb(191, 194, 196)"/><rect x="55" y="0" width="5" height="5" fill="rgb(202, 199, 192)"/><rect x="60" y="0" width="5" height="5" fill="rgb(160, 166, 172)"/><rect x="0" y="5" width="5" height="5" fill="rgb(148, 148, 147)"/><rect x="5" y="5" width="5" height="5" fill="rgb(154, 135, 116)"/><rect x="10" y="5" width="5" height="5" fill="rgb(161, 166, 173)"/><rect x="15" y="5" width="5" height="5" fill="rgb(168, 163, 154)"/><rect x="20" y="5" width="5" height="5" fill="rgb(127, 127, 127)"/><rect x="25" y="5" width="5" height="5" fill="rgb(116, 125, 137)"/><rect x="30" y="5" width="5" height="5" fill="rgb(142, 142, 138)"/><rect x="35" y="5" width="5" height="5" fill="rgb(152, 158, 166)"/><rect x="40" y="5" width="5" height="5" fill="rgb(171, 171, 167)"/><rect x="45" y="5" width="5" height="5" fill="rgb(113, 122, 135)"/><rect x="50" y="5" width="5" height="5" fill="rgb(157, 157, 155)"/><rect x="55" y="5" width="5" height="5" fill="rgb(129, 129, 129)"/><rect x="60" y="5" width="5" height="5" fill="rgb(138, 131, 120)"/><rect x="0" y="10" width="5" height="4" fill="rgb(219, 220, 219)"/><rect x="5" y="10" width="5" height="4" fill="rgb(215, 215, 211)"/><rect x="10" y="10" width="5" height="4" fill="rgb(222, 217, 209)"/><rect x="15" y="10" width="5" height="4" fill="rgb(199, 196, 189)"/><rect x="20" y="10" width="5" height="4" fill="rgb(206, 197, 187)"/><rect x="25" y="10" width="5" height="4" fill="rgb(209, 201, 192)"/><rect x="30" y="10" width="5" height="4" fill="rgb(200, 197, 190)"/><rect x="35" y="10" width="5" height="4" fill="rgb(214, 207, 199)"/><rect x="40" y="10" width="5" height="4" fill="rgb(214, 213, 209)"/><rect x="45" y="10" width="5" height="4" fill="rgb(223, 220, 215)"/><rect x="50" y="10" width="5" height="4" fill="rgb(211, 208, 202)"/><rect x="55" y="10" width="5" height="4" fill="rgb(230, 227, 221)"/><rect x="60" y="10" width="5" height="4" fill="rgb(202, 202, 199)"/></svg>
<svg style="left:1034px;top:507px" width="50" height="14"><rect x="0" y="0" width="5" height="5" fill="rgb(184, 180, 172)"/><rect x="5" y="0" width="5" height="5" fill="rgb(182, 181, 178)"/><rect x="10" y="0" width="5" height="5" fill="rgb(189, 189, 186)"/><rect x="20" y="0" width="5" height="5" fill="rgb(170, 170, 168)"/><rect x="25" y="0" width="5" height="5" fill="rgb(189, 192, 195)"/><rect x="30" y="0" width="5" height="5" fill="rgb(190, 193, 196)"/><rect x="35" y="0" width="5" height="5" fill="rgb(204, 195, 185)"/><rect x="40" y="0" width="5" height="5" fill="rgb(191, 187, 180)"/><rect x="45" y="0" width="5" height="5" fill="rgb(185, 189, 192)"/><rect x="0" y="5" width="5" height="5" fill="rgb(153, 152, 151)"/><rect x="5" y="5" width="5" height="5" fill="rgb(168, 173, 178)"/><rect x="10" y="5" width="5" height="5" fill="rgb(152, 151, 148)"/><rect x="15" y="5" width="5" height="5" fill="rgb(139, 139, 138)"/><rect x="20" y="5" width="5" height="5" fill="rgb(116, 116, 116)"/><rect x="25" y="5" width="5" height="5" fill="rgb(127, 119, 108)"/><rect x="30" y="5" width="5" height="5" fill="rgb(126, 134, 146)"/><rect x="35" y="5" width="5" height="5" fill="rgb(168, 167, 164)"/><rect x="40" y="5" width="5" height="5" fill="rgb(132, 132, 129)"/><rect x="45" y="5" width="5" height="5" fill="rgb(154, 153, 150)"/><rect x="0" y="10" width="5" height="4" fill="rgb(227, 225, 220)"/><rect x="5" y="10" width="5" height="4" fill="rgb(215, 216, 215)"/><rect x="10" y="10" width="5" height="4" fill="rgb(197, 196, 193)"/><rect x="15" y="10" width="5" height="4" fill="rgb(208, 200, 190)"/><rect x="20" y="10" width="5" height="4" fill="rgb(193, 192, 190)"/><rect x="25" y="10" width="5" height="4" fill="rgb(190, 193, 196)"/><rect x="30" y="10" width="5" height="4" fill="rgb(202, 204, 205)"/><rect x="35" y="10" width="5" height="4" fill="rgb(219, 218, 215)"/><rect x="40" y="10" width="5" height="4" fill="rgb(192, 195, 197)"/><rect x="45" y="10" width="5" height="4" fill="rgb(190, 193, 195)"/></svg>
<svg style="left:1033px;top:536px" width="85" height="14"><rect x="0" y="0" width="5" height="5" fill="rgb(194, 183, 171)"/><rect x="5" y="0" width="5" height="5" fill="rgb(193, 192, 189)"/><rect x="10" y="0" width="5" height="5" fill="rgb(207, 206, 203)"/><rect x="15" y="0" width="5" height="5" fill="rgb(188, 184, 176)"/><rect x="20" y="0" width="5" height="5" fill="rgb(184, 180, 172)"/><rect x="25" y="0" width="5" height="5" fill="rgb(183, 186, 190)"/><rect x="30" y="0" width="5" height="5" fill="rgb(197, 197, 193)"/><rect x="35" y="0" width="5" height="5" fill="rgb(183, 182, 179)"/><rect x="40" y="0" width="5" height="5" fill="rgb(198, 197, 194)"/><rect x="45" y="0" width="5" height="5" fill="rgb(199, 199, 196)"/><rect x="50" y="0" width="5" height="5" fill="rgb(187, 183, 175)"/><rect x="55" y="0" width="5" height="5" fill="rgb(181, 180, 177)"/><rect x="60" y="0" width="5" height="5" fill="rgb(208, 200, 190)"/><rect x="65" y="0" width="5" height="5" fill="rgb(218, 212, 204)"/><rect x="70" y="0" width="5" height="5" fill="rgb(173, 177, 182)"/><rect x="75" y="0" width="5" height="5" fill="rgb(203, 205, 206)"/><rect x="80" y="0" width="5" height="5" fill="rgb(197, 197, 193)"/><rect x="0" y="5" width="5" height="5" fill="rgb(168, 163, 154)"/><rect x="5" y="5" width="5" height="5" fill="rgb(155, 149, 140)"/><rect x="10" y="5" width="5" height="5" fill="rgb(163, 168, 174)"/><rect x="15" y="5" width="5" height="5" fill="rgb(182, 169, 154)"/><rect x="20" y="5" width="5" height="5" fill="rgb(144, 144, 141)"/><rect x="25" y="5" width="5" height="5" fill="rgb(127, 126, 126)"/><rect x="30" y="5" width="5" height="5" fill="rgb(126, 134, 145)"/><rect x="35" y="5" width="5" height="5" fill="rgb(159, 159, 155)"/><rect x="40" y="5" width="5" height="5" fill="rgb(172, 172, 170)"/><rect x="45" y="5" width="5" height="5" fill="rgb(171, 170, 169)"/><rect x="50" y="5" width="5" height="5" fill="rgb(172, 172, 170)"/><rect x="55" y="5" width="5" height="5" fill="rgb(137, 137, 134)"/><rect x="60" y="5" width="5" height="5" fill="rgb(171, 171, 167)"/><rect x="65" y="5" width="5" height="5" fill="rgb(197, 186, 175)"/><rect x="70" y="5" width="5" height="5" fill="rgb(168, 168, 166)"/><rect x="75" y="5" width="5" height="5" fill="rgb(122, 122, 121)"/><rect x="80" y="5" width="5" height="5" fill="rgb(140, 140, 139)"/><rect x="0" y="10" width="5" height="4" fill="rgb(199, 201, 203)"/><rect x="5" y="10" width="5" height="4" fill="rgb(226, 226, 224)"/><rect x="10" y="10" width="5" height="4" fill="rgb(194, 197, 199)"/><rect x="15" y="10" width="5" height="4" fill="rgb(206, 208, 209)"/><rect x="20" y="10" width="5" height="4" fill="rgb(220, 215, 207)"/><rect x="25" y="10" width="5" height="4" fill="rgb(209, 208, 205)"/><rect x="30" y="10" width="5" height="4" fill="rgb(194, 193, 190)"/><rect x="35" y="10" width="5" height="4" fill="rgb(211, 211, 207)"/><rect x="40" y="10" width="5" height="4" fill="rgb(189, 188, 186)"/><rect x="45" y="10" width="5" height="4" fill="rgb(203, 200, 194)"/><rect x="50" y="10" width="5" height="4" fill="rgb(192, 191, 187)"/><rect x="55" y="10" width="5" height="4" fill="rgb(218, 216, 210)"/><rect x="60" y="10" width="5" height="4" fill="rgb(221, 220, 217)"/><rect x="65" y="10" width="5" height="4" fill="rgb(205, 205, 202)"/><rect x="70" y="10" width="5" height="4" fill="rgb(220, 215, 208)"/><rect x="75" y="10" width="5" height="4" fill="rgb(211, 210, 207)"/><rect x="80" y="10" width="5" height="4" fill="rgb(212, 211, 207)"/></svg>
<div class="t" style="left:1033px;top:563.92px;font-size:15px;color:#000;">0000000000</div>
<svg style="left:779px;top:595px" width="205" height="13"><rect x="0" y="0" width="5" height="5" fill="rgb(215, 225, 229)"/><rect x="5" y="0" width="5" height="5" fill="rgb(176, 209, 226)"/><rect x="10" y="0" width="5" height="5" fill="rgb(184, 210, 225)"/><rect x="15" y="0" width="5" height="5" fill="rgb(194, 218, 229)"/><rect x="20" y="0" width="5" height="5" fill="rgb(165, 200, 221)"/><rect x="25" y="0" width="5" height="5" fill="rgb(183, 213, 227)"/><rect x="30" y="0" width="5" height="5" fill="rgb(182, 212, 227)"/><rect x="35" y="0" width="5" height="5" fill="rgb(197, 219, 229)"/><rect x="40" y="0" width="5" height="5" fill="rgb(184, 214, 227)"/><rect x="45" y="0" width="5" height="5" fill="rgb(169, 206, 225)"/><rect x="50" y="0" width="5" height="5" fill="rgb(203, 219, 226)"/><rect x="55" y="0" width="5" height="5" fill="rgb(191, 217, 228)"/><rect x="60" y="0" width="5" height="5" fill="rgb(206, 221, 227)"/><rect x="65" y="0" width="5" height="5" fill="rgb(187, 215, 228)"/><rect x="70" y="0" width="5" height="5" fill="rgb(173, 208, 225)"/><rect x="75" y="0" width="5" height="5" fill="rgb(202, 222, 230)"/><rect x="80" y="0" width="5" height="5" fill="rgb(214, 225, 229)"/><rect x="85" y="0" width="5" height="5" fill="rgb(164, 200, 221)"/><rect x="90" y="0" width="5" height="5" fill="rgb(186, 214, 227)"/><rect x="95" y="0" width="5" height="5" fill="rgb(203, 222, 230)"/><rect x="100" y="0" width="5" height="5" fill="rgb(222, 229, 231)"/><rect x="105" y="0" width="5" height="5" fill="rgb(209, 222, 227)"/><rect x="110" y="0" width="5" height="5" fill="rgb(183, 213, 227)"/><rect x="115" y="0" width="5" height="5" fill="rgb(209, 222, 227)"/><rect x="120" y="0" width="5" height="5" fill="rgb(202, 219, 228)"/><rect x="125" y="0" width="5" height="5" fill="rgb(208, 224, 231)"/><rect x="130" y="0" width="5" height="5" fill="rgb(157, 200, 223)"/><rect x="135" y="0" width="5" height="5" fill="rgb(185, 214, 227)"/><rect x="140" y="0" width="5" height="5" fill="rgb(221, 229, 230)"/><rect x="145" y="0" width="5" height="5" fill="rgb(217, 227, 229)"/><rect x="150" y="0" width="5" height="5" fill="rgb(154, 194, 219)"/><rect x="155" y="0" width="5" height="5" fill="rgb(163, 199, 221)"/><rect x="160" y="0" width="5" height="5" fill="rgb(173, 208, 225)"/><rect x="165" y="0" width="5" height="5" fill="rgb(188, 215, 227)"/><rect x="175" y="0" width="5" height="5" fill="rgb(184, 210, 225)"/><rect x="180" y="0" width="5" height="5" fill="rgb(201, 219, 228)"/><rect x="185" y="0" width="5" height="5" fill="rgb(222, 229, 231)"/><rect x="190" y="0" width="5" height="5" fill="rgb(206, 224, 230)"/><rect x="195" y="0" width="5" height="5" fill="rgb(163, 199, 221)"/><rect x="200" y="0" width="5" height="5" fill="rgb(207, 221, 227)"/><rect x="0" y="5" width="5" height="5" fill="rgb(209, 222, 227)"/><rect x="5" y="5" width="5" height="5" fill="rgb(172, 208, 225)"/><rect x="10" y="5" width="5" height="5" fill="rgb(146, 196, 221)"/><rect x="15" y="5" width="5" height="5" fill="rgb(148, 196, 221)"/><rect x="20" y="5" width="5" height="5" fill="rgb(203, 219, 226)"/><rect x="25" y="5" width="5" height="5" fill="rgb(188, 211, 222)"/><rect x="30" y="5" width="5" height="5" fill="rgb(128, 181, 214)"/><rect x="35" y="5" width="5" height="5" fill="rgb(172, 204, 223)"/><rect x="40" y="5" width="5" height="5" fill="rgb(187, 215, 227)"/><rect x="45" y="5" width="5" height="5" fill="rgb(126, 179, 214)"/><rect x="50" y="5" width="5" height="5" fill="rgb(159, 202, 223)"/><rect x="55" y="5" width="5" height="5" fill="rgb(160, 202, 223)"/><rect x="60" y="5" width="5" height="5" fill="rgb(204, 219, 226)"/><rect x="65" y="5" width="5" height="5" fill="rgb(108, 170, 210)"/><rect x="70" y="5" width="5" height="5" fill="rgb(130, 182, 215)"/><rect x="75" y="5" width="5" height="5" fill="rgb(138, 192, 220)"/><rect x="80" y="5" width="5" height="5" fill="rgb(211, 223, 228)"/><rect x="85" y="5" width="5" height="5" fill="rgb(178, 210, 226)"/><rect x="90" y="5" width="5" height="5" fill="rgb(131, 188, 219)"/><rect x="95" y="5" width="5" height="5" fill="rgb(146, 196, 221)"/><rect x="100" y="5" width="5" height="5" fill="rgb(139, 192, 220)"/><rect x="105" y="5" width="5" height="5" fill="rgb(158, 202, 223)"/><rect x="110" y="5" width="5" height="5" fill="rgb(170, 206, 225)"/><rect x="115" y="5" width="5" height="5" fill="rgb(159, 202, 223)"/><rect x="120" y="5" width="5" height="5" fill="rgb(136, 185, 216)"/><rect x="125" y="5" width="5" height="5" fill="rgb(179, 211, 226)"/><rect x="130" y="5" width="5" height="5" fill="rgb(197, 216, 224)"/><rect x="135" y="5" width="5" height="5" fill="rgb(126, 186, 218)"/><rect x="140" y="5" width="5" height="5" fill="rgb(162, 203, 224)"/><rect x="145" y="5" width="5" height="5" fill="rgb(200, 217, 225)"/><rect x="150" y="5" width="5" height="5" fill="rgb(172, 207, 225)"/><rect x="155" y="5" width="5" height="5" fill="rgb(141, 193, 220)"/><rect x="160" y="5" width="5" height="5" fill="rgb(166, 200, 221)"/><rect x="165" y="5" width="5" height="5" fill="rgb(179, 211, 226)"/><rect x="170" y="5" width="5" height="5" fill="rgb(173, 208, 225)"/><rect x="175" y="5" width="5" height="5" fill="rgb(210, 222, 228)"/><rect x="180" y="5" width="5" height="5" fill="rgb(125, 185, 218)"/><rect x="185" y="5" width="5" height="5" fill="rgb(180, 211, 226)"/><rect x="190" y="5" width="5" height="5" fill="rgb(203, 219, 226)"/><rect x="195" y="5" width="5" height="5" fill="rgb(203, 219, 226)"/><rect x="200" y="5" width="5" height="5" fill="rgb(171, 207, 225)"/><rect x="0" y="10" width="5" height="3" fill="rgb(220, 228, 230)"/><rect x="5" y="10" width="5" height="3" fill="rgb(202, 219, 228)"/><rect x="10" y="10" width="5" height="3" fill="rgb(213, 227, 231)"/><rect x="15" y="10" width="5" height="3" fill="rgb(184, 210, 225)"/><rect x="20" y="10" width="5" height="3" fill="rgb(229, 234, 234)"/><rect x="25" y="10" width="5" height="3" fill="rgb(213, 227, 231)"/><rect x="30" y="10" width="5" height="3" fill="rgb(206, 224, 230)"/><rect x="35" y="10" width="5" height="3" fill="rgb(225, 231, 233)"/><rect x="40" y="10" width="5" height="3" fill="rgb(184, 213, 227)"/><rect x="45" y="10" width="5" height="3" fill="rgb(195, 219, 229)"/><rect x="50" y="10" width="5" height="3" fill="rgb(216, 226, 229)"/><rect x="55" y="10" width="5" height="3" fill="rgb(222, 229, 231)"/><rect x="60" y="10" width="5" height="3" fill="rgb(194, 218, 229)"/><rect x="65" y="10" width="5" height="3" fill="rgb(214, 227, 232)"/><rect x="70" y="10" width="5" height="3" fill="rgb(234, 236, 234)"/><rect x="75" y="10" width="5" height="3" fill="rgb(190, 216, 228)"/><rect x="80" y="10" width="5" height="3" fill="rgb(179, 207, 224)"/><rect x="85" y="10" width="5" height="3" fill="rgb(222, 231, 233)"/><rect x="90" y="10" width="5" height="3" fill="rgb(210, 224, 230)"/><rect x="95" y="10" width="5" height="3" fill="rgb(220, 230, 232)"/><rect x="100" y="10" width="5" height="3" fill="rgb(181, 208, 224)"/><rect x="105" y="10" width="5" height="3" fill="rgb(220, 230, 232)"/><rect x="110" y="10" width="5" height="3" fill="rgb(226, 233, 233)"/><rect x="115" y="10" width="5" height="3" fill="rgb(208, 224, 231)"/><rect x="120" y="10" width="5" height="3" fill="rgb(225, 231, 231)"/><rect x="125" y="10" width="5" height="3" fill="rgb(176, 205, 223)"/><rect x="130" y="10" width="5" height="3" fill="rgb(212, 224, 228)"/><rect x="135" y="10" width="5" height="3" fill="rgb(222, 229, 231)"/><rect x="140" y="10" width="5" height="3" fill="rgb(214, 225, 229)"/><rect x="145" y="10" width="5" height="3" fill="rgb(221, 229, 232)"/><rect x="150" y="10" width="5" height="3" fill="rgb(213, 224, 228)"/><rect x="155" y="10" width="5" height="3" fill="rgb(215, 228, 232)"/><rect x="160" y="10" width="5" height="3" fill="rgb(223, 230, 232)"/><rect x="165" y="10" width="5" height="3" fill="rgb(201, 221, 230)"/><rect x="170" y="10" width="5" height="3" fill="rgb(217, 226, 229)"/><rect x="175" y="10" width="5" height="3" fill="rgb(200, 221, 230)"/><rect x="180" y="10" width="5" height="3" fill="rgb(200, 220, 229)"/><rect x="185" y="10" width="5" height="3" fill="rgb(205, 221, 229)"/><rect x="190" y="10" width="5" height="3" fill="rgb(220, 230, 232)"/><rect x="195" y="10" width="5" height="3" fill="rgb(211, 226, 231)"/><rect x="200" y="10" width="5" height="3" fill="rgb(188, 215, 228)"/></svg>
<div class="t" style="left:782px;top:622.92px;font-size:15px;color:#1680c6;">john@home.com.au</div>
<div class="b" style="left:331px;top:654px;width:896px;height:7px;background:#c9c9c9"></div>
<div class="b" style="left:331px;top:663px;width:125px;height:27px;background:#f1f0ec"></div>
<div class="b" style="left:458px;top:663px;width:384px;height:27px;background:#f1f0ec"></div>
<div class="b" style="left:844px;top:663px;width:383px;height:27px;background:#f1f0ec"></div>
<div class="b" style="left:331px;top:692px;width:125px;height:35px;background:#f1f0ec"></div>
<div class="b" style="left:458px;top:692px;width:384px;height:35px;background:#f1f0ec"></div>
<div class="b" style="left:844px;top:692px;width:383px;height:35px;background:#f1f0ec"></div>
<div class="b" style="left:331px;top:729px;width:125px;height:35px;background:#f1f0ec"></div>
<div class="b" style="left:458px;top:729px;width:384px;height:35px;background:#f1f0ec"></div>
<div class="b" style="left:844px;top:729px;width:383px;height:35px;background:#f1f0ec"></div>
<div class="t" style="left:497px;top:667.12px;font-size:15px;color:#000;">Parent/Caregiver 1</div>
<div class="t" style="left:882.1px;top:667.12px;font-size:15px;color:#000;">Parent/Caregiver 2</div>
<div class="t" style="left:340.5px;top:700.12px;font-size:15px;color:#000;">Name</div>
<div class="t" style="left:340.5px;top:737.32px;font-size:15px;color:#000;">Occupation</div>
<div class="b" style="left:463px;top:695px;width:275px;height:30px;background:#fff;border:1px solid #9c9c9c;box-shadow:inset 0 1px 2px rgba(0,0,0,0.07)"><div style="position:absolute;left:2px;right:2px;top:0;bottom:0;overflow:hidden"><div class="t" style="left:0px;top:3.50px;font-size:15px;color:#7f7f7f">Linda Marshall</div></div></div>
<div class="b" style="left:849px;top:695px;width:275px;height:30px;background:#fff;border:1px solid #9c9c9c;box-shadow:inset 0 1px 2px rgba(0,0,0,0.07)"><div style="position:absolute;left:2px;right:2px;top:0;bottom:0;overflow:hidden"><div class="t" style="left:0px;top:3.50px;font-size:15px;color:#7f7f7f">John Marshall</div></div></div>
<div class="b" style="left:463px;top:732px;width:53px;height:30px;background:#fff;border:1px solid #9c9c9c;box-shadow:inset 0 1px 2px rgba(0,0,0,0.07)"><div style="position:absolute;left:2px;right:2px;top:0;bottom:0;overflow:hidden"><div class="t" style="left:0px;top:3.50px;font-size:15px;color:#7f7f7f">DOC</div></div></div>
<div class="b" style="left:524px;top:732px;width:185px;height:30px;background:#fafaf8;border:1px solid #9fb4c9"><div class="t" style="left:2.5px;top:4.50px;font-size:15px;color:#808080">Doctor</div></div>
<svg style="left:692px;top:743px" width="11" height="7" viewBox="0 0 11 7"><path d="M1 1l4.5 4.5L10 1" fill="none" stroke="#333" stroke-width="2"/></svg>
<div class="b" style="left:849px;top:732px;width:52px;height:30px;background:#fff;border:1px solid #9c9c9c;box-shadow:inset 0 1px 2px rgba(0,0,0,0.07)"><div style="position:absolute;left:2px;right:2px;top:0;bottom:0;overflow:hidden"><div class="t" style="left:0px;top:3.50px;font-size:15px;color:#7f7f7f">DIR</div></div></div>
<div class="b" style="left:910px;top:732px;width:184px;height:30px;background:#fafaf8;border:1px solid #9fb4c9"><div class="t" style="left:2.5px;top:4.50px;font-size:15px;color:#808080">Director</div></div>
<svg style="left:1077px;top:743px" width="11" height="7" viewBox="0 0 11 7"><path d="M1 1l4.5 4.5L10 1" fill="none" stroke="#333" stroke-width="2"/></svg>
<div class="b" style="left:329px;top:766px;width:901px;height:35px;background:#b8c5cf"></div>
<div class="b" style="left:336px;top:769px;width:75px;height:29px;border:1px solid #9a9a9a;border-radius:4px;background:linear-gradient(#fdfdfd,#e6e6e6)"></div>
<div class="t" style="left:350.4px;top:773.92px;font-size:15px;color:#000;">Cancel</div>
<svg style="left:0;top:0" width="1906" height="921"><defs><filter id="sh" x="-10%" y="-50%" width="120%" height="200%"><feGaussianBlur stdDeviation="1.5"/></filter></defs>
<ellipse cx="961" cy="575" rx="202" ry="16.5" fill="none" stroke="#000" stroke-opacity="0.3" stroke-width="4" filter="url(#sh)"/>
<ellipse cx="959" cy="572.6" rx="201" ry="16.5" fill="none" stroke="#6ca52a" stroke-width="4"/>
<ellipse cx="854" cy="635" rx="89" ry="16" fill="none" stroke="#000" stroke-opacity="0.3" stroke-width="4" filter="url(#sh)"/>
<ellipse cx="852.3" cy="632.9" rx="88" ry="16" fill="none" stroke="#6ca52a" stroke-width="4"/>
</svg>
<svg style="left:0;top:0" width="1906" height="921"><path d="M1896 0h10v10a10 10 0 0 0-10-10z" fill="#cfd0d4"/><path d="M0 911v10h10a10 10 0 0 1-10-10z" fill="#d8d8d8"/><path d="M1906 911v10h-10a10 10 0 0 0 10-10z" fill="#d8d8d8"/><rect x="0" y="919" width="1906" height="2" fill="#d5d5d5"/></svg>
</body></html>
